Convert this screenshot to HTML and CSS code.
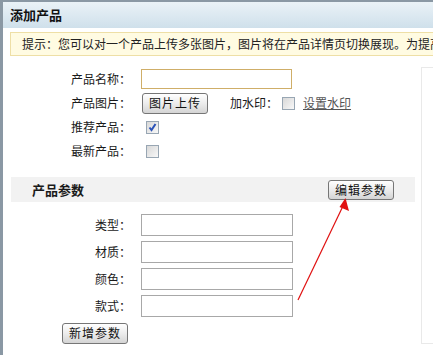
FILE: index.html
```html
<html>
<head>
<meta charset="UTF-8">
<title>添加产品</title>
<link rel="stylesheet" href="styles.css">
</head>
<body>
<div class="dialog">
    <div class="titlebar">添加产品</div>
    <div class="tip">提示：您可以对一个产品上传多张图片，图片将在产品详情页切换展现。为提高商品展示效果，建议上传清晰图片。</div>

    <div class="dialogBody">
        <div class="main">
            <div class="form">
                <label>产品名称：</label>
                <div><input type="text" class="nameInput"></div>

                <label>产品图片：</label>
                <div class="picRow">
                    <button class="btn">图片上传</button>
                    <span class="watermark">加水印：</span>
                    <span class="check"></span>
                    <a href="#" class="link">设置水印</a>
                </div>

                <label>推荐产品：</label>
                <div class="checkCell"><span class="check checked"><svg width="11" height="11" viewBox="0 0 11 11"><path d="M2.5 5.5 L4.5 8 L8.5 2" fill="none" stroke="#2a52b8" stroke-width="2"/></svg></span></div>

                <label>最新产品：</label>
                <div class="checkCell"><span class="check"></span></div>
            </div>

            <div class="section">
                <span class="sectionTitle">产品参数</span>
                <button class="btn smallBtn">编辑参数</button>
            </div>

            <div class="params">
                <label>类型：</label>
                <input type="text" class="paramInput">
                <label>材质：</label>
                <input type="text" class="paramInput">
                <label>颜色：</label>
                <input type="text" class="paramInput">
                <label>款式：</label>
                <input type="text" class="paramInput">
                <button class="btn addBtn">新增参数</button>
            </div>
        </div>
        <div class="side"></div>
    </div>
</div>

<svg class="arrow" width="433" height="355" viewBox="0 0 433 355">
    <line x1="298" y1="300" x2="343" y2="206" stroke="#e01010" stroke-width="1.2"/>
    <polygon points="345.5,198 349,211 339.5,207" fill="#e01010"/>
</svg>
</body>
</html>
```

FILE: styles.css
```css
body {
    margin: 0;
    overflow: hidden;
    background-color: #fff;
    font-family: "Noto Sans CJK SC", "DejaVu Sans", sans-serif;
    font-size: 12px;
    color: #1a1a1a;
}

.dialog {
    width: 640px;
    height: 360px;
    border-left: 3px solid #8a98a4;
    border-top: 2px solid #8a98a4;
    background-color: #fff;
}

.titlebar {
    height: 26px;
    line-height: 26px;
    padding-left: 7px;
    font-size: 13px;
    font-weight: 700;
    color: #111;
    background: linear-gradient(#eaf2f7, #cfe0eb);
}

.tip {
    margin: 4px 0 0 7px;
    height: 22px;
    line-height: 22px;
    padding-left: 11px;
    border: 1px solid #eedfa6;
    background-color: #fffbe2;
    white-space: nowrap;
    overflow: hidden;
    color: #222;
}

.dialogBody {
    display: flex;
    margin-top: 11px;
}

.main {
    width: 404px;
    margin-left: 8px;
}

.side {
    width: 200px;
    height: 275px;
    margin-left: 6px;
    border: 1px solid #e9e9e9;
}

.form {
    display: grid;
    grid-template-columns: 120px auto;
    grid-auto-rows: 24px;
    column-gap: 10px;
    align-items: center;
}

.form label,
.params label {
    text-align: right;
    line-height: 16px;
}

.form > div {
    display: flex;
    align-items: center;
}

.nameInput {
    width: 151px;
    height: 20px;
    box-sizing: border-box;
    border: 1px solid #cfae68;
    margin: 0;
    padding: 0;
}

.btn {
    box-sizing: border-box;
    width: 66px;
    height: 21px;
    margin: 0;
    padding: 0;
    border: 1px solid #767676;
    border-radius: 3px;
    background: linear-gradient(#ffffff, #ececec 50%, #d4d4d4);
    font-family: "Noto Sans CJK SC", sans-serif;
    font-size: 12px;
    letter-spacing: 1px;
    color: #111;
    line-height: 18px;
}

.picRow .btn {
    margin-left: 1px;
}

.watermark {
    margin-left: 22px;
    line-height: 16px;
}

.check {
    display: inline-block;
    width: 13px;
    height: 13px;
    box-sizing: border-box;
    border: 1px solid #98a6b3;
    background: linear-gradient(135deg, #d8d8d8, #f8f8f8);
}

.picRow .check {
    margin-left: 4px;
}

.checkCell .check {
    margin-left: 5px;
}

.check svg {
    display: block;
    margin: 0;
}

.link {
    margin-left: 8px;
    color: #555;
    text-decoration: underline;
    line-height: 16px;
}

.section {
    display: flex;
    align-items: center;
    justify-content: space-between;
    height: 25px;
    margin-top: 14px;
    padding: 0 21px;
    background-color: #f2f2f2;
}

.sectionTitle {
    font-size: 13px;
    font-weight: 700;
    line-height: 16px;
}

.smallBtn {
    height: 20px;
}

.params {
    display: grid;
    grid-template-columns: 120px auto;
    grid-auto-rows: 22px;
    column-gap: 10px;
    row-gap: 5px;
    align-items: center;
    margin-top: 12px;
}

.paramInput {
    width: 152px;
    height: 22px;
    box-sizing: border-box;
    border: 1px solid #a8a8a8;
    margin: 0;
    padding: 0;
}

.addBtn {
    justify-self: end;
    margin-right: 3px;
}

.arrow {
    position: absolute;
    top: 0;
    left: 0;
    pointer-events: none;
}
```
